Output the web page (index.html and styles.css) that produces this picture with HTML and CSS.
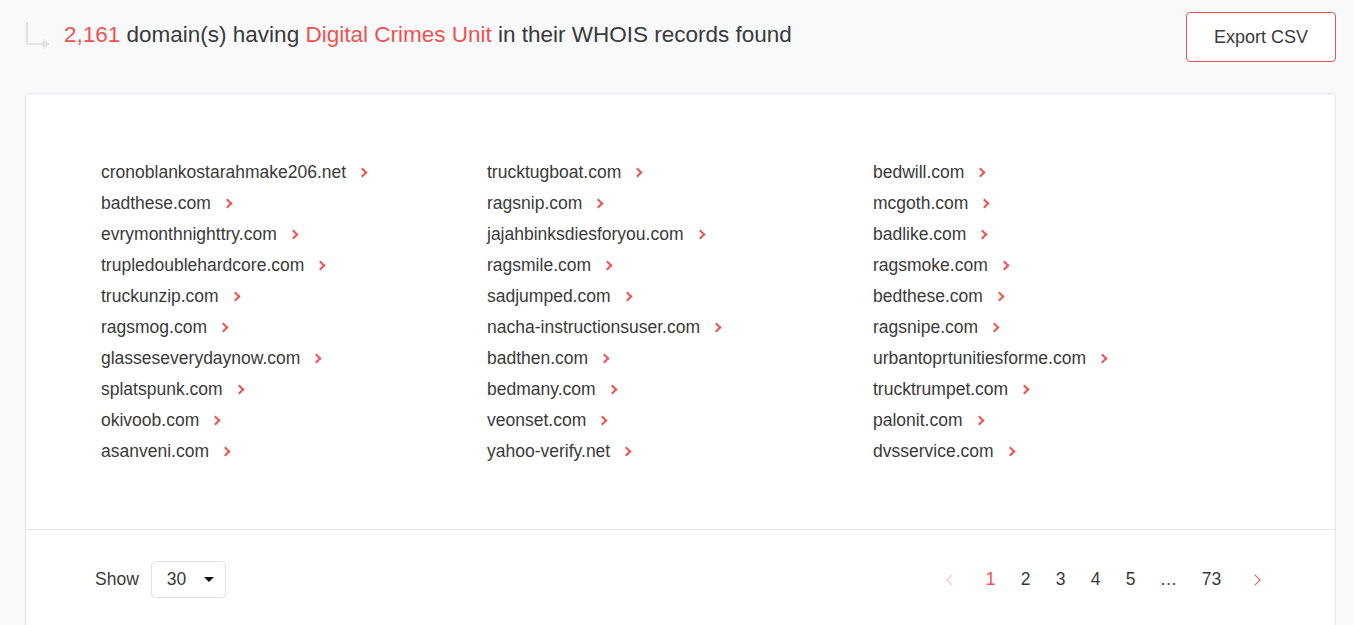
FILE: index.html
```html
<!DOCTYPE html>
<html>
<head>
<meta charset="utf-8">
<link rel="stylesheet" href="styles.css">
</head>
<body>
<div class="page">
  <header class="top">
    <div class="title">
      <svg class="corner" width="26" height="28" viewBox="0 0 26 28"><path d="M2 1 V23 H20" fill="none" stroke="#e3e3e3" stroke-width="2.2"/><path d="M18 18 L25 23 L18 28 Z" fill="#e3e3e3"/></svg>
      <h1><span class="red">2,161</span> domain(s) having <span class="red">Digital Crimes Unit</span> in their WHOIS records found</h1>
    </div>
    <button class="export">Export CSV</button>
  </header>
  <section class="card">
    <div class="list">
      <ul class="col">
        <li><a>cronoblankostarahmake206.net</a><span class="chev"></span></li>
        <li><a>badthese.com</a><span class="chev"></span></li>
        <li><a>evrymonthnighttry.com</a><span class="chev"></span></li>
        <li><a>trupledoublehardcore.com</a><span class="chev"></span></li>
        <li><a>truckunzip.com</a><span class="chev"></span></li>
        <li><a>ragsmog.com</a><span class="chev"></span></li>
        <li><a>glasseseverydaynow.com</a><span class="chev"></span></li>
        <li><a>splatspunk.com</a><span class="chev"></span></li>
        <li><a>okivoob.com</a><span class="chev"></span></li>
        <li><a>asanveni.com</a><span class="chev"></span></li>
      </ul>
      <ul class="col">
        <li><a>trucktugboat.com</a><span class="chev"></span></li>
        <li><a>ragsnip.com</a><span class="chev"></span></li>
        <li><a>jajahbinksdiesforyou.com</a><span class="chev"></span></li>
        <li><a>ragsmile.com</a><span class="chev"></span></li>
        <li><a>sadjumped.com</a><span class="chev"></span></li>
        <li><a>nacha-instructionsuser.com</a><span class="chev"></span></li>
        <li><a>badthen.com</a><span class="chev"></span></li>
        <li><a>bedmany.com</a><span class="chev"></span></li>
        <li><a>veonset.com</a><span class="chev"></span></li>
        <li><a>yahoo-verify.net</a><span class="chev"></span></li>
      </ul>
      <ul class="col">
        <li><a>bedwill.com</a><span class="chev"></span></li>
        <li><a>mcgoth.com</a><span class="chev"></span></li>
        <li><a>badlike.com</a><span class="chev"></span></li>
        <li><a>ragsmoke.com</a><span class="chev"></span></li>
        <li><a>bedthese.com</a><span class="chev"></span></li>
        <li><a>ragsnipe.com</a><span class="chev"></span></li>
        <li><a>urbantoprtunitiesforme.com</a><span class="chev"></span></li>
        <li><a>trucktrumpet.com</a><span class="chev"></span></li>
        <li><a>palonit.com</a><span class="chev"></span></li>
        <li><a>dvsservice.com</a><span class="chev"></span></li>
      </ul>
    </div>
    <footer class="foot">
      <div class="show">
        <span>Show</span>
        <div class="select"><span>30</span><span class="caret"></span></div>
      </div>
      <nav class="pager">
        <span class="pchev prev"></span>
        <span class="pg active">1</span>
        <span class="pg">2</span>
        <span class="pg">3</span>
        <span class="pg">4</span>
        <span class="pg">5</span>
        <span class="pg dots">…</span>
        <span class="pg last">73</span>
        <span class="pchev next"></span>
      </nav>
    </footer>
  </section>
</div>
</body>
</html>
```
FILE: styles.css
```css
* { box-sizing: border-box; }
html, body { margin: 0; padding: 0; }
body {
  background: #f8f9fb;
  font-family: "Liberation Sans", Arial, sans-serif;
  color: #3a3a3a;
  overflow: hidden;
}
.page { padding: 12px 18px 0 25px; }
.top {
  display: flex;
  justify-content: space-between;
  align-items: flex-start;
  height: 81px;
}
.title { display: flex; align-items: flex-start; padding-top: 8px; }
.corner { margin-top: 1px; margin-right: 13px; }
h1 {
  margin: 0;
  font-weight: normal;
  font-size: 22.5px;
  line-height: 30px;
  color: #3a3a3a;
}
.red { color: #ef5350; }
.export {
  width: 150px;
  height: 50px;
  background: #fff;
  border: 1px solid #e8574f;
  border-radius: 4px;
  font-family: inherit;
  font-size: 18px;
  color: #3a3a3a;
  padding: 0;
}
.card {
  background: #fff;
  border: 1px solid #e6e6e6;
  border-radius: 4px;
  width: 1311px;
  height: 560px;
}
.list {
  display: grid;
  grid-template-columns: 386px 386px 386px;
  padding: 63px 75px 62px;
  border-bottom: 1px solid #e6e6e6;
}
.col { list-style: none; margin: 0; padding: 0; }
.col li {
  display: flex;
  align-items: center;
  height: 31px;
  font-size: 17.5px;
}
.col a { color: #3a3a3a; }
.chev {
  width: 7px; height: 7px;
  border-top: 2px solid #ef5350;
  border-right: 2px solid #ef5350;
  transform: rotate(45deg);
  margin-left: 13px;
}
.foot {
  display: flex;
  justify-content: space-between;
  align-items: center;
  padding: 31px 76px 0 69px;
}
.show { display: flex; align-items: center; font-size: 17.5px; }
.select {
  margin-left: 12px;
  width: 75px;
  height: 37px;
  border: 1px solid #e2e2e2;
  border-radius: 4px;
  display: flex;
  align-items: center;
  padding-left: 15px;
  font-size: 17.5px;
}
.caret {
  width: 0; height: 0;
  border-left: 5px solid transparent;
  border-right: 5px solid transparent;
  border-top: 5px solid #111;
  margin-left: 18px;
}
.pager { display: flex; align-items: center; font-size: 17.5px; }
.pg { width: 35px; text-align: center; color: #3a3a3a; }
.pg.active { color: #ef5350; }
.pg.dots { width: 41px; }
.pg.last { width: 45px; }
.pchev {
  width: 8px; height: 8px;
  border-top: 1.5px solid #ef5350;
  border-right: 1.5px solid #ef5350;
}
.prev { transform: rotate(-135deg); opacity: 0.35; margin-right: 17px; }
.next { transform: rotate(45deg); margin-left: 17px; }
```
